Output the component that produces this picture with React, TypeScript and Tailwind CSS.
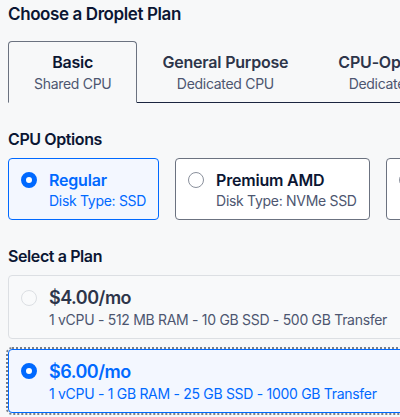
import React from "react";

const font = { fontFamily: "Inter, 'Noto Sans', sans-serif" };

function Radio({ state }: { state: "on" | "off" | "faded" }) {
  if (state === "on")
    return <span className="mt-[3px] block h-4 w-4 shrink-0 rounded-full border-[5px] border-[#0069ff] bg-white" />;
  if (state === "faded")
    return <span className="mt-[4px] block h-4 w-4 shrink-0 rounded-full border border-[#dcdfe3] bg-[#f9fafb]" />;
  return <span className="mt-[3px] block h-4 w-4 shrink-0 rounded-full border border-[#8a909c] bg-white" />;
}

const subCls = "text-[14px] tracking-[-0.3px] whitespace-nowrap";

function Tab({ title, sub, active }: { title: string; sub: string; active?: boolean }) {
  return (
    <div
      className={
        "flex shrink-0 flex-col items-center px-[25px] pt-[9px] pb-[7px] " +
        (active
          ? "rounded-t-[4px] border border-b-transparent border-[#6b7280]"
          : "border-t border-t-transparent border-b border-b-[#1b2540]")
      }
    >
      <div
        className={
          "text-[16px] leading-[22px] font-semibold tracking-[-0.2px] whitespace-nowrap " +
          (active ? "text-[#0b1633]" : "text-[#2d354a]")
        }
      >
        {title}
      </div>
      <div className={subCls + " leading-[22px] text-[#4d5670]"}>{sub}</div>
    </div>
  );
}

function CpuCard({ title, sub, active }: { title: string; sub: string; active?: boolean }) {
  return (
    <div
      className={
        "flex shrink-0 items-start gap-[12px] rounded-[4px] border pl-[12px] pr-[12px] pt-[10px] pb-[8px] " +
        (active ? "border-[#0069ff] bg-[#f3f7ff]" : "border-[#6b7280] bg-white")
      }
    >
      <Radio state={active ? "on" : "off"} />
      <div>
        <div
          className={
            "text-[16px] leading-[22px] font-semibold tracking-[-0.2px] whitespace-nowrap " +
            (active ? "text-[#0069ff]" : "text-[#0b1633]")
          }
        >
          {title}
        </div>
        <div className={subCls + " leading-[20px] " + (active ? "text-[#0069ff]" : "text-[#4d5670]")}>{sub}</div>
      </div>
    </div>
  );
}

function PlanCard({ price, spec, active }: { price: string; spec: string; active?: boolean }) {
  return (
    <div
      className={
        "flex w-[420px] items-start gap-[12px] rounded-[4px] border pl-[12px] pt-[10px] pb-[8px] " +
        (active
          ? "border-[#0069ff] bg-[#f3f7ff] outline-2 outline-dotted outline-[#7a7f87]"
          : "border-[#dcdfe3] bg-[#f8f9fa]")
      }
    >
      <Radio state={active ? "on" : "faded"} />
      <div>
        <div
          className={
            "text-[18px] leading-[24px] font-semibold tracking-[-0.5px] whitespace-nowrap " +
            (active ? "text-[#0069ff]" : "text-[#2d354a]")
          }
        >
          {price}
        </div>
        <div className={subCls + " leading-[20px] " + (active ? "text-[#0069ff]" : "text-[#4d5670]")}>{spec}</div>
      </div>
    </div>
  );
}

export default function App() {
  return (
    <div style={font} className="h-[417px] w-[400px] overflow-hidden bg-[#f7f8f9] pl-2 pt-[2px]">
      <h2 className="text-[17px] leading-[24px] font-semibold tracking-[-0.4px] text-[#0b1633]">Choose a Droplet Plan</h2>

      <div className="mt-[15px] flex">
        <Tab title="Basic" sub="Shared CPU" active />
        <Tab title="General Purpose" sub="Dedicated CPU" />
        <Tab title="CPU-Optimized" sub="Dedicated CPU" />
        <div className="flex-1 border-b border-[#1b2540]" />
      </div>

      <h3 className="mt-[24px] text-[16px] leading-[24px] font-semibold tracking-[-0.4px] text-[#0b1633]">CPU Options</h3>
      <div className="mt-[7px] flex gap-4">
        <CpuCard title="Regular" sub="Disk Type: SSD" active />
        <CpuCard title="Premium AMD" sub="Disk Type: NVMe SSD" />
        <CpuCard title="Premium Intel" sub="Disk Type: NVMe SSD" />
      </div>

      <h3 className="mt-[24px] text-[16px] leading-[24px] font-semibold tracking-[-0.4px] text-[#0b1633]">Select a Plan</h3>
      <div className="mt-[7px] flex flex-col gap-[10px]">
        <PlanCard price="$4.00/mo" spec="1 vCPU - 512 MB RAM - 10 GB SSD - 500 GB Transfer" />
        <PlanCard price="$6.00/mo" spec="1 vCPU - 1 GB RAM - 25 GB SSD - 1000 GB Transfer" active />
      </div>
    </div>
  );
}
